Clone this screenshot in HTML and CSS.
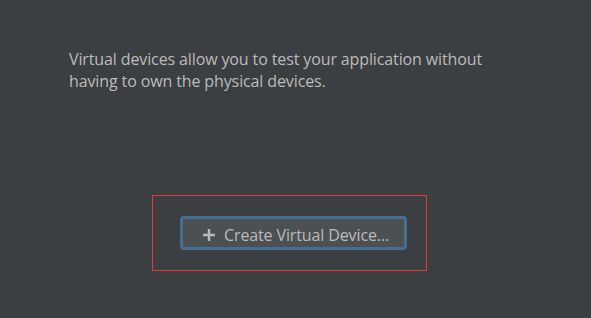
FILE: index.html
```html
<!DOCTYPE html>
<html lang="en">
<head>
  <meta charset="UTF-8">
  <meta name="viewport" content="width=device-width, initial-scale=1.0">
  <title>Virtual Devices</title>
  <link rel="stylesheet" href="styles.css">
</head>
<body>
  <div class="panel">
    <p class="intro">
      Virtual devices allow you to test your application without<br>
      having to own the physical devices.
    </p>

    <div class="actions">
      <button class="create-btn">
        <svg class="plus" width="12" height="12" viewBox="0 0 12 12">
          <path d="M6 0v12M0 6h12" stroke="#bbbbbb" stroke-width="2.4"/>
        </svg>
        <span class="label">Create Virtual Device...</span>
      </button>
    </div>
  </div>
</body>
</html>
```

FILE: styles.css
```css
* {
  margin: 0;
  padding: 0;
  box-sizing: border-box;
}

html, body {
  height: 100%;
}

body {
  font-family: "Open Sans", "Noto Sans", sans-serif;
  background: #3c3f41;
  color: #bbbbbb;
}

.panel {
  padding: 48px 0 0 69px;
}

.intro {
  font-size: 16px;
  line-height: 22px;
  letter-spacing: -0.12px;
}

.actions {
  margin: 103px 0 0 83px;
  width: 275px;
  height: 76px;
  border: 1px solid #e0393e;
  display: flex;
  align-items: center;
  padding-left: 27px;
}

.create-btn {
  width: 227px;
  height: 34px;
  background: #4c5052;
  border: 3px solid #466d94;
  border-radius: 4px;
  color: #bbbbbb;
  font-family: inherit;
  font-size: 16px;
  letter-spacing: -0.12px;
  display: flex;
  align-items: center;
  gap: 9px;
  padding: 4px 0 0 20px;
}

.plus {
  flex-shrink: 0;
}
```
